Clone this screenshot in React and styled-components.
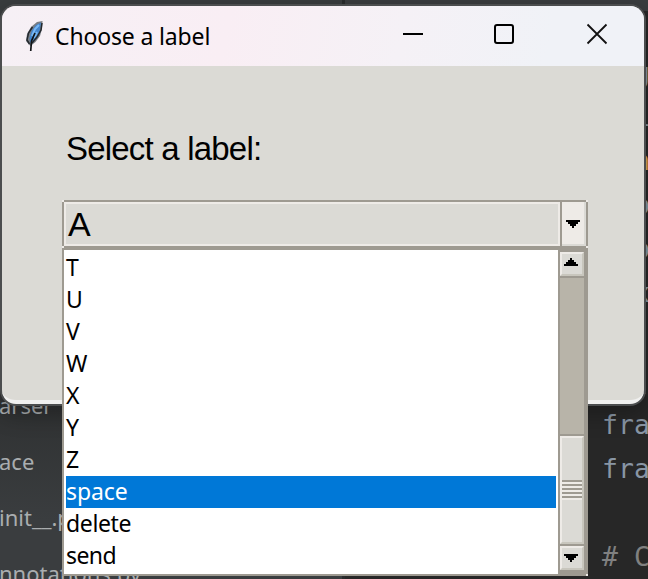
import React from "react";
import styled, { createGlobalStyle } from "styled-components";

const Global = createGlobalStyle`
  * { box-sizing: border-box; }
  body { margin: 0; overflow: hidden; background: #2b2b2b; }
`;

const Desktop = styled.div`
  position: relative;
  display: grid;
  grid-template-columns: 345px 1fr;
  width: 648px;
  height: 579px;
  overflow: hidden;
  background: #2b2b2b;
`;

const ProjectTree = styled.div`
  display: flex;
  flex-direction: column;
  padding-top: 377px;
  border-right: 3px solid #292b2c;
  background: linear-gradient(#393d3e 0, #393d3e 10px, #505254 80px, #505254 300px, #303233 410px, #3a3d3f 520px, #3a3d3f 100%);
  color: #a9adaf;
  font: 22px/56px "Noto Sans", sans-serif;
  white-space: pre;
`;

const TreeItem = styled.div`
  height: 56px;
  flex: none;
  margin-left: -1px;
`;

const Editor = styled.div`
  display: flex;
  flex-direction: column;
  padding: 40px 0 0 257px;
  border-top: 11px solid #3a3d3f;
  background: #272727;
  font: 26.5px/44px "DejaVu Sans Mono", monospace;
  white-space: pre;
`;

const CodeLine = styled.div`
  height: 44px;
  flex: none;
  color: ${(p) => p.$color || "#8996a5"};
`;

const Dialog = styled.section`
  position: absolute;
  left: 2px;
  top: 6px;
  width: 642px;
  height: 398px;
  overflow: hidden;
  border-radius: 14px;
  border-bottom: 4px solid #f0f0ef;
  background: #dbdad5;
  box-shadow: 0 0 0 2px #4b4d4e, 0 8px 22px 3px #0004;
`;

const TitleBar = styled.header`
  display: flex;
  align-items: center;
  height: 60px;
  padding-left: 21px;
  background: linear-gradient(100deg, #f6f0f5 0%, #f9eef4 35%, #f5f1f6 62%, #f0f2f7 85%);
`;

const Title = styled.h1`
  flex: 1;
  margin: 0 0 0 10px;
  color: #000;
  font: 400 23px/32px "Noto Sans", sans-serif;
  letter-spacing: -0.15px;
`;

const WindowButtons = styled.div`
  display: grid;
  grid-template-columns: 90px 92px 94px;
  justify-items: center;
  padding-bottom: 4px;
`;

const Content = styled.div`
  padding: 65px 0 0 64px;
`;

const Label = styled.div`
  height: 69px;
  color: #000;
  font: 33px/36px "Liberation Sans", sans-serif;
  letter-spacing: -0.8px;
`;

const Dropdown = styled.div`
  position: absolute;
  left: 62px;
  top: 200px;
  width: 526px;
`;

const Combo = styled.div`
  display: grid;
  grid-template-columns: 496px 26px;
  height: 50px;
  border: 2px solid #9e9a91;
  border-bottom-width: 4px;
`;

const Value = styled.div`
  padding-left: 2px;
  border: 2px solid #eeebe7;
  color: #000;
  font: 34px/40px "Liberation Sans", sans-serif;
`;

const ComboButton = styled.div`
  display: flex;
  align-items: center;
  justify-content: center;
  padding-right: 2px;
  border-left: 2px solid #9e9a91;
  background: #eeebe7;
  box-shadow: inset -2px -2px #dbdad5;
`;

const ListPopup = styled.div`
  display: grid;
  grid-template-columns: 494px 30px;
  height: 326px;
  border-left: 2px solid #9e9a91;
  border-bottom: 2px solid #9e9a91;
  background: #fff;
`;

const Options = styled.div`
  padding: 2px;
`;

const Option = styled.div`
  height: 32px;
  background: ${(p) => (p.$selected ? "#0078d7" : "transparent")};
  color: ${(p) => (p.$selected ? "#fff" : "#000")};
  font: 23px/31px "Noto Sans", sans-serif;
  letter-spacing: ${(p) => p.$spacing || 0}px;
`;

const Scrollbar = styled.div`
  display: grid;
  grid-template-rows: 24px 156px 108px 24px;
  row-gap: 2px;
  padding: 2px 4px 2px 2px;
  background: #9e9a91;
`;

const ScrollPart = styled.div`
  display: flex;
  align-items: center;
  justify-content: center;
  border: 2px solid;
  border-color: #eeebe7 #c8c6bd #c8c6bd #eeebe7;
  background: #dbdad5;
`;

const ScrollButton = styled(ScrollPart)`
  padding-right: 2px;
  padding-bottom: ${(p) => (p.$raised ? 4 : 0)}px;
`;

const Trough = styled.div`
  background: #b8b4a9;
`;

const Grip = styled.div`
  width: 20px;
  height: 20px;
  background: repeating-linear-gradient(#9e9a91 0 2px, #eeebe7 2px 4px);
`;

const Corner = styled.i`
  position: absolute;
  width: 2px;
  height: 2px;
  background: #eeebe7;
  top: ${(p) => p.$y}px;
  left: ${(p) => p.$x}px;
`;

const ArrowIcon = styled.svg`
  display: block;
  flex: none;
`;

const Arrow = ({ up }) => (
  <ArrowIcon width="14" height="8" viewBox="0 0 14 8" shapeRendering="crispEdges">
    <path
      transform={up ? "translate(0 8) scale(1 -1)" : undefined}
      d="M0 0h14v2h-2v2h-2v2h-2v2H6V6H4V4H2V2H0z"
    />
  </ArrowIcon>
);

const Feather = () => (
  <svg width="22" height="34" viewBox="0 0 22 34">
    <path d="M19.5 2 14 3 8 8 4 15 3 22l2.5 3 2 2 5-4 4.5-6 2-7z" fill="#777d84" />
    <path d="M18 3.5 13 6 8.5 12 6.5 19l1 5 5-4 4-7z" fill="#4385cc" />
    <path d="M16 6 12 10 9 17M14 13l-3 6" stroke="#78b8f5" strokeWidth="2" fill="none" />
    <path d="M9.5 8 5.5 14 4 21l2.5 4M19 4l-1 7-4 7-5 6" fill="none" stroke="#24292e" strokeWidth="1.5" />
    <path d="M12 14 8.5 22 7.7 32" fill="none" stroke="#111417" strokeWidth="1.7" />
  </svg>
);

const letters = ["T", "U", "V", "W", "X", "Y", "Z"];
const words = [
  { text: "space", spacing: -0.1 },
  { text: "delete", spacing: -0.35 },
  { text: "send", spacing: -0.6 },
];

const code = [
  ["g"], ["i"], ["n", "#d8a957"], ["p"], ["p"], ["x"], [" "], ["("],
  ["fra"], ["fra"], [" "], ["# C", "#808080"],
];

export default function App() {
  return (
    <>
      <Global />
      <Desktop>
        <ProjectTree>
          <TreeItem>arser</TreeItem>
          <TreeItem>ace</TreeItem>
          <TreeItem>init__.py</TreeItem>
          <TreeItem>nnotations.py</TreeItem>
        </ProjectTree>
        <Editor>
          {code.map(([text, color], i) => (
            <CodeLine key={i} $color={color}>{i < 8 ? "  " + text : text}</CodeLine>
          ))}
        </Editor>
        <Dialog>
          <TitleBar>
            <Feather />
            <Title>Choose a label</Title>
            <WindowButtons>
              <svg width="22" height="22" viewBox="0 0 22 22">
                <path d="M1 11h20" stroke="#000" strokeWidth="2" />
              </svg>
              <svg width="22" height="22" viewBox="0 0 22 22">
                <rect x="2" y="2" width="18" height="18" rx="2" fill="none" stroke="#000" strokeWidth="2" />
              </svg>
              <svg width="22" height="22" viewBox="0 0 22 22">
                <path d="m1.5 1.5 19 19m0-19-19 19" stroke="#111" strokeWidth="1.8" />
              </svg>
            </WindowButtons>
          </TitleBar>
          <Content>
            <Label>Select a label:</Label>
          </Content>
        </Dialog>
        <Dropdown>
          <Combo>
            <Value>A</Value>
            <ComboButton><Arrow /></ComboButton>
          </Combo>
          <ListPopup>
            <Options>
              {letters.map((l) => <Option key={l}>{l}</Option>)}
              {words.map((w) => (
                <Option key={w.text} $selected={w.text === "space"} $spacing={w.spacing}>{w.text}</Option>
              ))}
            </Options>
            <Scrollbar>
              <ScrollButton $raised><Arrow up /></ScrollButton>
              <Trough />
              <ScrollPart><Grip /></ScrollPart>
              <ScrollButton><Arrow /></ScrollButton>
            </Scrollbar>
          </ListPopup>
          <Corner $x={0} $y={0} />
          <Corner $x={524} $y={0} />
          <Corner $x={0} $y={46} />
          <Corner $x={524} $y={46} />
          <Corner $x={524} $y={374} />
        </Dropdown>
      </Desktop>
    </>
  );
}
